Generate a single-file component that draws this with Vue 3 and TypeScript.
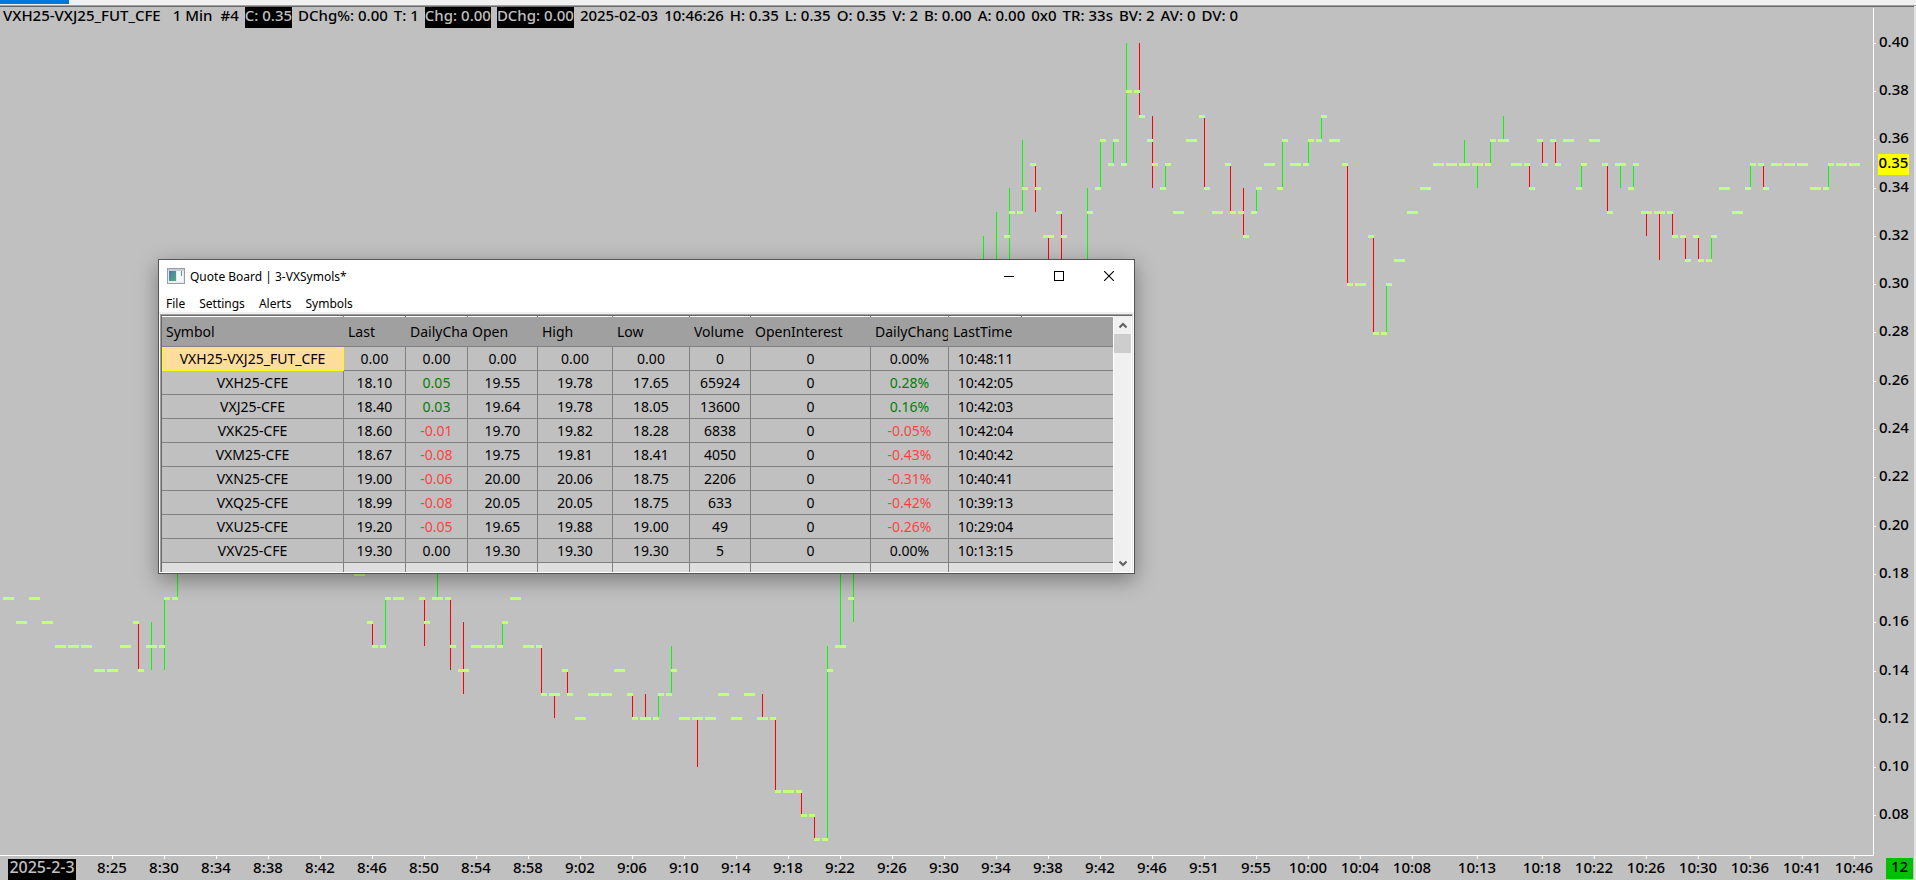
<script setup lang="ts">
type Tone = 'up' | 'down' | ''

interface Bar {
  slot: number
  open: number
  high: number
  low: number
  close: number
  color: 'green' | 'red'
}

const BAR_STEP = 13
const FIRST_BAR = 8
const PLOT_WIDTH = 1873
const PLOT_HEIGHT = 847
const TOP_PRICE = 40

// slot:open,high,low,close in cents; a single number is a flat minute
const source = `0:17 1:16 2:17 3:16 4:15 5:15 6:15 7:14 8:14 9:15 10:16,16,14,14 11:15,16,14,15g
12:15,17,14,17 13:17,20,17,20 27:18 28:16,16,15,15 29:15,17,15,17 30:17 32:17,17,15,16
33:17,20,17,17g 34:17,17,14,15 35:14,16,13,14r 36:15 37:15 38:15,16,15,16 39:17 40:15
41:15,15,13,13 42:13,13,12,13r 43:14,14,13,13 44:12 45:13 46:13 47:14 48:13,13,12,12
49:12,13,12,12r 50:12,13,12,13 51:13,15,13,14 52:12 53:12,12,10,12r 54:12 55:13 56:12 57:13
58:12,13,12,12r 59:12,12,9,9 60:9 61:9,9,8,8 62:8,8,7,7 63:7,15,7,14 64:15,20,15,15g
65:17,20,16,20 75:30,32,30,31 76:31,33,30,31g 77:32,34,30,33 78:33,36,33,34 79:35,35,33,34
80:32,32,30,32r 81:33,33,30,32 82:31 83:30,34,30,33 84:34,36,34,36 85:35,36,35,36
86:35,40,35,38 87:38,40,37,37 88:36,37,34,35 89:34,35,34,35 90:33 91:36 92:37,37,34,34
93:33 94:35,35,33,33 95:33,34,32,32 96:33,34,33,34 97:35 98:34,36,34,36 99:35
100:35,36,35,36 101:36,37,36,37 102:36 103:35,35,30,30 104:30 105:32,32,28,28
106:28,30,28,30 107:31 108:33 109:34 110:35 111:35 112:35,36,35,35g 113:35,35,34,35g
114:35,36,35,36 115:36,37,36,36g 116:35 117:35,35,34,34 118:36,36,35,35 119:36,36,35,35
120:36 121:34,35,34,35 122:36 123:35,35,33,33 124:35,35,34,35g 125:34,35,34,35
126:33,33,32,33r 127:33,33,31,33r 128:33,33,32,32 129:32,32,31,31 130:32,32,31,31
131:31,32,31,32 132:34 133:33 134:34,35,34,35 135:35,35,34,34 136:35 137:35 138:35
139:34 140:34,35,34,35 141:35 142:35`

const bars: Bar[] = source.split(/\s+/).map((entry) => {
  const [slot, body] = entry.split(':')
  const forced = body.endsWith('g') ? 'green' : body.endsWith('r') ? 'red' : null
  const n = body.replace(/[gr]$/, '').split(',').map(Number)
  const [open, high, low, close] = n.length === 1 ? [n[0], n[0], n[0], n[0]] : n
  return { slot: Number(slot), open, high, low, close, color: forced ?? (close >= open ? 'green' : 'red') }
})

const xOf = (slot: number): number => FIRST_BAR + slot * BAR_STEP
const yOf = (cents: number): number => Math.round(35.2 + (TOP_PRICE - cents) * 24.11)

const prices: string[] = Array.from({ length: 17 }, (_, i) => ((TOP_PRICE - i * 2) / 100).toFixed(2))

const times: [number, string][] = [
  [8, '8:25'], [12, '8:30'], [16, '8:34'], [20, '8:38'], [24, '8:42'], [28, '8:46'], [32, '8:50'],
  [36, '8:54'], [40, '8:58'], [44, '9:02'], [48, '9:06'], [52, '9:10'], [56, '9:14'], [60, '9:18'],
  [64, '9:22'], [68, '9:26'], [72, '9:30'], [76, '9:34'], [80, '9:38'], [84, '9:42'], [88, '9:46'],
  [92, '9:51'], [96, '9:55'], [100, '10:00'], [104, '10:04'], [108, '10:08'], [113, '10:13'],
  [118, '10:18'], [122, '10:22'], [126, '10:26'], [130, '10:30'], [134, '10:36'], [138, '10:41'],
  [142, '10:46'],
]
const leftOf = (slot: number): string => `${(xOf(slot) / PLOT_WIDTH) * 100}%`
const lastPriceTop = `${(yOf(35) / PLOT_HEIGHT) * 100}%`

const menus: string[] = ['File', 'Settings', 'Alerts', 'Symbols']
const columns: string[] = [
  'Symbol', 'Last', 'DailyChange', 'Open', 'High', 'Low', 'Volume', 'OpenInterest', 'DailyChange%', 'LastTime',
]
const quotes: string[][] = [
  ['VXH25-VXJ25_FUT_CFE', '0.00', '0.00', '0.00', '0.00', '0.00', '0', '0', '0.00%', '10:48:11'],
  ['VXH25-CFE', '18.10', '0.05', '19.55', '19.78', '17.65', '65924', '0', '0.28%', '10:42:05'],
  ['VXJ25-CFE', '18.40', '0.03', '19.64', '19.78', '18.05', '13600', '0', '0.16%', '10:42:03'],
  ['VXK25-CFE', '18.60', '-0.01', '19.70', '19.82', '18.28', '6838', '0', '-0.05%', '10:42:04'],
  ['VXM25-CFE', '18.67', '-0.08', '19.75', '19.81', '18.41', '4050', '0', '-0.43%', '10:40:42'],
  ['VXN25-CFE', '19.00', '-0.06', '20.00', '20.06', '18.75', '2206', '0', '-0.31%', '10:40:41'],
  ['VXQ25-CFE', '18.99', '-0.08', '20.05', '20.05', '18.75', '633', '0', '-0.42%', '10:39:13'],
  ['VXU25-CFE', '19.20', '-0.05', '19.65', '19.88', '19.00', '49', '0', '-0.26%', '10:29:04'],
  ['VXV25-CFE', '19.30', '0.00', '19.30', '19.30', '19.30', '5', '0', '0.00%', '10:13:15'],
]
const tone = (value: string, col: number): Tone => {
  if (col !== 2 && col !== 8) return ''
  const n = parseFloat(value)
  return n > 0 ? 'up' : n < 0 ? 'down' : ''
}
</script>

<template>
  <div class="screen">
    <div class="strip"><span class="progress"></span></div>
    <main class="chart">
      <section class="plot">
        <svg class="bars" :viewBox="`0 0 ${PLOT_WIDTH} ${PLOT_HEIGHT}`" preserveAspectRatio="none" shape-rendering="crispEdges">
          <g v-for="b in bars" :key="b.slot">
            <rect
              v-if="b.high !== b.low"
              :class="b.color"
              :x="xOf(b.slot)"
              :y="yOf(b.high)"
              width="1"
              :height="yOf(b.low) - yOf(b.high)"
            />
            <rect class="dash" :x="xOf(b.slot) - 5" :y="yOf(b.open) - 1" width="6" height="3" />
            <rect class="dash" :x="xOf(b.slot)" :y="yOf(b.close) - 1" width="6" height="3" />
          </g>
        </svg>
        <header class="info">
          <span class="name">VXH25-VXJ25_FUT_CFE</span>
          <span class="period">1 Min</span>
          <span>#4</span>
          <span class="boxed">C: 0.35</span>
          <span>DChg%: 0.00</span>
          <span>T: 1</span>
          <span class="boxed">Chg: 0.00</span>
          <span class="boxed">DChg: 0.00</span>
          <span>2025-02-03</span>
          <span>10:46:26</span>
          <span>H: 0.35</span>
          <span>L: 0.35</span>
          <span>O: 0.35</span>
          <span>V: 2</span>
          <span>B: 0.00</span>
          <span>A: 0.00</span>
          <span>0x0</span>
          <span>TR: 33s</span>
          <span>BV: 2</span>
          <span>AV: 0</span>
          <span>DV: 0</span>
        </header>
      </section>

      <aside class="price-axis">
        <span v-for="p in prices" :key="p" class="price">{{ p }}</span>
        <span class="last-price" :style="{ top: lastPriceTop }">0.35</span>
      </aside>

      <footer class="time-axis">
        <span class="date">2025-2-3</span>
        <span v-for="[slot, label] in times" :key="slot" class="time" :style="{ left: leftOf(slot) }">{{ label }}</span>
      </footer>
      <div class="corner"><span class="count">12</span></div>
    </main>

    <section class="window" aria-label="Quote Board">
      <div class="titlebar">
        <svg class="app-icon" width="18" height="16" viewBox="0 0 18 16">
          <defs>
            <linearGradient id="pane" x1="0" y1="0" x2="1" y2="1">
              <stop offset="0" stop-color="#4a78b8" />
              <stop offset="1" stop-color="#4fae74" />
            </linearGradient>
          </defs>
          <rect x="0.5" y="0.5" width="17" height="15" fill="#e6e9ed" stroke="#9a9da3" />
          <rect x="1" y="1" width="16" height="2" fill="#c9cdd4" />
          <rect x="2" y="3" width="7" height="10" fill="url(#pane)" />
          <rect x="10" y="3" width="6" height="10" fill="#f7f8fa" />
          <rect x="14" y="3" width="1" height="5" fill="#4f9a78" />
          <rect x="1" y="13" width="16" height="2" fill="#eceef1" />
        </svg>
        <h1>Quote Board | 3-VXSymols*</h1>
        <div class="controls">
          <button type="button" aria-label="Minimize">
            <svg width="10" height="10" viewBox="0 0 10 10" shape-rendering="crispEdges"><path d="M0 5.5H10" stroke="#000" /></svg>
          </button>
          <button type="button" aria-label="Maximize">
            <svg width="10" height="10" viewBox="0 0 10 10" shape-rendering="crispEdges"><path d="M.5.5H9.500V9.500H.5Z" fill="none" stroke="#000" /></svg>
          </button>
          <button type="button" aria-label="Close">
            <svg width="10" height="10" viewBox="0 0 10 10"><path d="M0 0L10 10M10 0L0 10" stroke="#000" stroke-width="1.1" /></svg>
          </button>
        </div>
      </div>
      <nav class="menubar">
        <button v-for="m in menus" :key="m" type="button">{{ m }}</button>
      </nav>
      <div class="pane">
        <table>
          <colgroup>
            <col v-for="(c, i) in columns" :key="c" :class="`c${i}`" />
            <col />
          </colgroup>
          <thead>
            <tr>
              <th v-for="c in columns" :key="c" scope="col"><span>{{ c }}</span></th>
              <th class="rest"></th>
            </tr>
          </thead>
          <tbody>
            <tr v-for="(row, r) in quotes" :key="row[0]">
              <td v-for="(v, c) in row" :key="c" :class="[tone(v, c), { selected: r === 0 && c === 0 }]">{{ v }}</td>
              <td></td>
            </tr>
            <tr class="partial">
              <td v-for="c in columns" :key="c"></td>
              <td></td>
            </tr>
          </tbody>
        </table>
        <div class="scrollbar">
          <button type="button" aria-label="Scroll up">
            <svg width="8" height="7" viewBox="0 0 8 7"><path d="M.5 5.500L4 2L7.500 5.500" fill="none" stroke="#606060" stroke-width="2" /></svg>
          </button>
          <span class="thumb"></span>
          <button type="button" class="down-arrow" aria-label="Scroll down">
            <svg width="8" height="7" viewBox="0 0 8 7"><path d="M.5 1.500L4 5L7.500 1.500" fill="none" stroke="#606060" stroke-width="2" /></svg>
          </button>
        </div>
      </div>
    </section>
  </div>
</template>

<style>
body {
  margin: 0;
  background: #c0c0c0;
}
</style>

<style scoped>
.screen {
  position: relative;
  display: flex;
  flex-direction: column;
  box-sizing: border-box;
  min-height: 100vh;
  overflow: hidden;
  background: #c0c0c0;
  color: #000;
  font: 500 15px/17px "Noto Sans", "Open Sans", sans-serif;
}
button {
  padding: 0;
  border: 0;
  background: none;
  color: inherit;
  font: inherit;
}
.strip {
  height: 5px;
  background: #f0f0f0;
  border-bottom: 1px solid #a0a0a0;
  box-shadow: 0 1px 0 #696969;
}
.progress {
  display: block;
  width: 69px;
  height: 4px;
  background: #0078d7;
}
.chart {
  flex: 1;
  display: grid;
  grid-template-columns: 1fr 40px;
  grid-template-rows: 1fr 24px;
  padding-top: 2px;
  border-right: 2px solid #e3e3e3;
}
.plot {
  position: relative;
  border-right: 1px solid #fff;
  border-bottom: 1px solid #fff;
}
.bars {
  position: absolute;
  inset: 0;
  width: 100%;
  height: 100%;
}
.green { fill: #00ff00; }
.red { fill: #ff0000; }
.dash { fill: #c0ff80; }
.info {
  position: relative;
  display: flex;
  gap: 6px;
  margin-top: -1px;
  padding-left: 3px;
  white-space: nowrap;
}
.info .name { margin-right: 6px; }
.info .period { margin-right: 2px; }
.boxed,
.date,
.last-price,
.count {
  padding-bottom: 4px;
}
.boxed {
  background: #000;
  color: #c0c0c0;
}
.price-axis {
  position: relative;
  display: flex;
  flex-direction: column;
  padding: 9px 0 18px;
}
.price {
  flex: 1;
  display: flex;
  align-items: center;
  gap: 3px;
}
.price::before {
  content: "";
  width: 2px;
  height: 1px;
  margin-top: 4px;
  background: #fff;
}
.last-price {
  position: absolute;
  left: 4px;
  width: 31px;
  margin-top: -10px;
  background: #ff0;
  text-align: center;
}
.time-axis {
  position: relative;
  margin-right: 1px;
}
.time {
  position: absolute;
  top: 0;
  padding-top: 3px;
  transform: translateX(-50%);
}
.time::before {
  content: "";
  position: absolute;
  top: 0;
  left: 50%;
  width: 1px;
  height: 3px;
  background: #fff;
}
.date {
  display: block;
  width: 68px;
  margin: 3px 0 0 8px;
  background: #000;
  color: #c0c0c0;
  font-size: 16px;
  text-align: center;
}
.corner {
  padding: 2px 1px 1px 12px;
}
.count {
  display: block;
  background: #00c000;
  text-align: center;
}

.window {
  position: absolute;
  top: 259px;
  left: 158px;
  width: 975px;
  border: 1px solid #555;
  background: #fff;
  box-shadow: 0 6px 20px rgba(0, 0, 0, 0.36);
  font-size: 12px;
  font-weight: 400;
  line-height: 16px;
}
.titlebar {
  display: flex;
  align-items: center;
  height: 31px;
  padding-left: 8px;
}
h1 {
  flex: 1;
  margin: 2px 0 0 5px;
  font-size: 12px;
  font-weight: 400;
}
.controls {
  display: flex;
}
.controls button {
  display: grid;
  place-items: center;
  width: 50px;
  height: 30px;
}
.menubar {
  display: flex;
  gap: 14px;
  height: 21px;
  padding: 0 7px;
  border-bottom: 2px solid #f0f0f0;
}
.menubar button {
  height: 26px;
}
.pane {
  display: flex;
  margin: 0 1px 1px;
  border-top: 1px solid #a0a0a0;
  border-left: 1px solid #a0a0a0;
  border-right: 1px solid #e3e3e3;
  box-shadow: inset 1px 1px 0 #696969;
  padding: 1px 1px 0;
  background: #fff;
}
table {
  flex: 1;
  width: 0;
  table-layout: fixed;
  border-spacing: 0;
  font-size: 14px;
  line-height: 22px;
}
.c0 { width: 182px; }
.c1, .c2 { width: 62px; }
.c3 { width: 70px; }
.c4 { width: 75px; }
.c5 { width: 77px; }
.c6 { width: 61px; }
.c7 { width: 120px; }
.c8 { width: 78px; }
.c9 { width: 73px; }
th {
  position: relative;
  height: 29px;
  padding: 0 1px 0 4px;
  border-top: 1px solid #fff;
  border-bottom: 1px solid #808080;
  background: #a0a0a0;
  font-weight: 400;
  text-align: left;
  white-space: nowrap;
}
th span {
  display: block;
  overflow: hidden;
}
th:not(.rest)::after {
  content: "";
  position: absolute;
  top: -1px;
  right: 0;
  width: 1px;
  height: 1px;
  background: #808080;
}
td {
  height: 23px;
  padding: 0;
  border-right: 1px solid #808080;
  border-bottom: 1px solid #808080;
  background: #c0c0c0;
  text-align: center;
  white-space: nowrap;
}
td:nth-last-child(-n + 2) {
  border-right: 0;
}
.selected {
  background: #ffdd9c;
  border-color: #ff0;
  box-shadow: inset 1px 1px 0 #ff0;
}
.up { color: #008000; }
.down { color: #ff4040; }
.partial td {
  height: 9px;
  border-bottom: 0;
  background: #dedede;
}
.scrollbar {
  display: flex;
  flex-direction: column;
  width: 17px;
  margin-left: 1px;
  background: #f0f0f0;
}
.scrollbar button {
  display: grid;
  place-items: center;
  height: 18px;
}
.thumb {
  height: 19px;
  background: #cdcdcd;
}
.down-arrow {
  margin-top: auto;
}
</style>
